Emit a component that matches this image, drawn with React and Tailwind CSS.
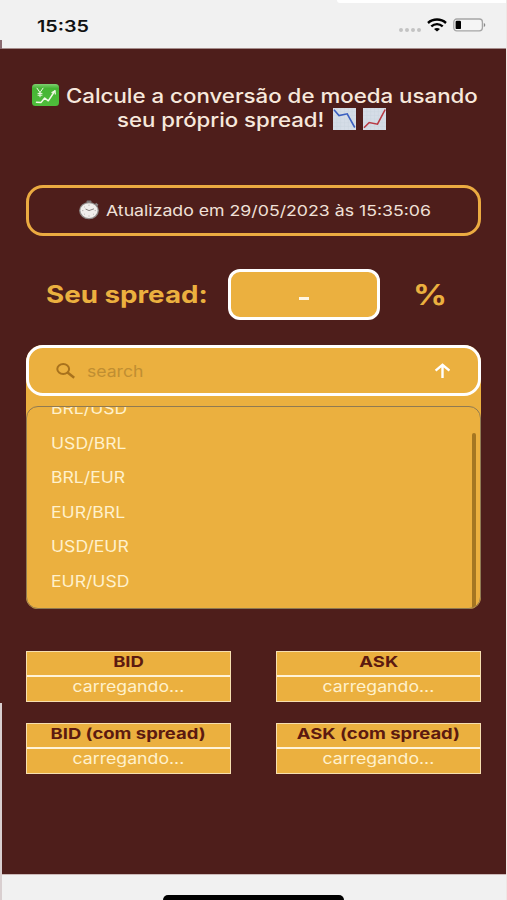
import React, { useState } from "react";

const PAIRS = ["BRL/USD", "USD/BRL", "BRL/EUR", "EUR/BRL", "USD/EUR", "EUR/USD"];

const QUOTES = ["BID", "ASK", "BID (com spread)", "ASK (com spread)"];

// Text set wider than the font's natural proportions
const Wide = ({ className = "", children }) => (
  <span className={`inline-block whitespace-nowrap ${className}`}>{children}</span>
);

const YenChart = () => (
  <svg width="27" height="22" viewBox="0 0 27 22" className="shrink-0">
    <defs>
      <linearGradient id="yen" x1="0" y1="0" x2="0" y2="1">
        <stop offset="0" stopColor="#7fd070" />
        <stop offset="0.2" stopColor="#45b534" />
        <stop offset="1" stopColor="#4fbd3b" />
      </linearGradient>
    </defs>
    <rect width="27" height="22" rx="3.5" fill="url(#yen)" />
    <g fill="none" stroke="#f1f8e6" strokeLinecap="round" strokeLinejoin="round">
      <path d="M5 4.2l3 4.3 3-4.3M8 8.5v4.3M6 9.4h4M6 11.2h4" strokeWidth="1" />
      <path d="M4.5 18.2l4.6.2 3.6-4.4 3.6 2.8L22.8 7" strokeWidth="1.5" />
      <path d="M20 8.6l3-1.8.3 3.2" strokeWidth="1.2" />
    </g>
  </svg>
);

const TrendChart = ({ down }) => (
  <svg width="23" height="22" viewBox="0 0 23 22" className="shrink-0">
    <rect width="23" height="22" fill="#d5dde7" />
    <path
      d="M0 3.7h23M0 7.4h23M0 11h23M0 14.7h23M0 18.3h23M3.8 0v22M7.6 0v22M11.5 0v22M15.3 0v22M19.1 0v22"
      stroke="#cbd4df"
      strokeWidth="0.5"
    />
    <path
      d={down ? "M1 1.8L6 7.5l8.2-1.7L21.8 19.5" : "M1 19.8l5.2-5.3 8.3 1.7L22.2 1.5"}
      fill="none"
      stroke={down ? "#3a5fc0" : "#b93a44"}
      strokeWidth="1.6"
    />
  </svg>
);

const Stopwatch = () => (
  <svg width="22" height="20" viewBox="0 0 22 20" className="-mt-px shrink-0">
    <rect x="8.6" y="0.5" width="4.8" height="2.6" rx="0.8" fill="#7c7776" />
    <path d="M17.5 3.5l2.4 2" stroke="#8b8686" strokeWidth="1.8" />
    <ellipse cx="11" cy="10.6" rx="9.9" ry="8.6" fill="#8f8b89" />
    <ellipse cx="11" cy="10.6" rx="8.6" ry="7.4" fill="#f0eeeb" />
    <path d="M7.5 9l3.5 1.6 5-1.8" fill="none" stroke="#6b6463" strokeWidth="0.8" />
    <path
      d="M11 4.6v1.3M11 15.4v1.3M4 10.6h1.4M16.6 10.6H18M6 6.6l.9.7M16 14.6l-.9-.7M6 14.6l.9-.7"
      stroke="#a5a09e"
      strokeWidth="0.7"
    />
  </svg>
);

const StatusBar = () => (
  <header className="relative flex h-[49px] items-start justify-between border-b border-[#a58c8b] bg-[#f1f1f1] pl-[37px] pr-[21px]">
    <div className="absolute right-0 top-0 h-[3px] w-[170px] rounded-bl-full bg-white" />
    <Wide className="mt-4 origin-left scale-x-[1.23] text-base/5 font-semibold text-[#111]">15:35</Wide>
    <div className="mt-[18px] flex items-center">
      <div className="mr-[6px] mt-[9px] flex gap-[2px]">
        {[0, 1, 2, 3].map((dot) => (
          <i key={dot} className="size-1 rounded-full bg-[#c3c3c3]" />
        ))}
      </div>
      <svg width="20" height="14" viewBox="0 0 20 14">
        <g fill="none" stroke="#000" strokeWidth="2.4">
          <path d="M1 5C6 .4 14 .4 19 5" />
          <path d="M4.3 8.4c3.3-3 8.1-3 11.4 0" />
        </g>
        <path d="M7 11c1.8-1.5 4.2-1.5 6 0l-3 2.6z" />
      </svg>
      <svg width="33" height="14" viewBox="0 0 33 14" className="ml-[6px]">
        <rect x="0.8" y="1" width="28.6" height="11.8" rx="3" fill="#f5f5f5" stroke="#a5a5a5" strokeWidth="1.3" />
        <rect x="2.6" y="2.7" width="5.4" height="8.4" rx="1.2" />
        <path d="M30.8 5v4q1.5-.6 1.5-2t-1.5-2z" fill="#8a8a8a" />
      </svg>
    </div>
  </header>
);

const QuoteCard = ({ label }) => (
  <div className="h-[51px] border border-[#f6dfb0] bg-[#ebb03f] text-center text-[15px]">
    <div className="h-[25px] border-b-2 border-[#fff3d8] leading-[19px] font-bold text-[#5c1a10]">
      <Wide className="scale-x-[1.23]">{label}</Wide>
    </div>
    <div className="leading-5 text-[#fff1cc]">
      <Wide className="scale-x-[1.18]">carregando...</Wide>
    </div>
  </div>
);

export default function App() {
  const [search, setSearch] = useState("");

  return (
    <div className="relative flex h-[900px] w-[507px] flex-col overflow-hidden bg-[#4e1e1b] font-['Inter',sans-serif]">
      <StatusBar />

      <main className="flex-1 px-[26px] pt-[34px]">
        <h1 className="text-xl/6 font-medium text-[#f7e8dc]">
          <div className="flex items-center pl-[6px]">
            <YenChart />
            <Wide className="ml-[7px] mt-px -mb-px origin-left scale-x-[1.114]">
              Calcule a conversão de moeda usando
            </Wide>
          </div>
          <div className="flex items-center pl-[91px]">
            <div className="mt-px -mb-px w-[216px]">
              <Wide className="origin-left scale-x-[1.11]">seu próprio spread!</Wide>
            </div>
            <div className="flex gap-[7px]">
              <TrendChart down />
              <TrendChart />
            </div>
          </div>
        </h1>

        <div className="mt-[54px] flex h-[51px] w-[455px] items-center rounded-[17px] border-[3px] border-[#ebab41] pl-[49px] text-[15px] text-[#f0e0d8]">
          <Stopwatch />
          <Wide className="ml-[6px] mt-px origin-left scale-x-[1.18]">
            Atualizado em 29/05/2023 às 15:35:06
          </Wide>
        </div>

        <div className="mt-[33px] flex h-[51px] items-center pl-5 text-[#ebb03f]">
          <div className="w-[182px]">
            <Wide className="origin-left scale-x-[1.155] text-2xl font-bold">Seu spread:</Wide>
          </div>
          <div className="flex h-full w-[152px] items-center justify-center rounded-xl border-[3px] border-white bg-[#ebb03f] pt-2">
            <div className="h-[3px] w-[10px] bg-[#fff6e5]" />
          </div>
          <Wide className="ml-[33px] origin-left scale-x-[1.2] text-[28px] font-bold">%</Wide>
        </div>

        <div className="mt-[25px] w-[455px] rounded-t-[17px] rounded-b-xl bg-[#ebb03f]">
          <div className="flex h-[51px] items-center rounded-[17px] border-[3px] border-white pl-[27px] pr-7">
            <svg width="20" height="16" viewBox="0 0 20 16" fill="none" stroke="#a8721d">
              <ellipse cx="7.2" cy="6" rx="5.9" ry="4.9" strokeWidth="2" />
              <path d="M11.6 9.6l6.6 5.2" strokeWidth="2.5" />
            </svg>
            <div className="ml-[11px] flex-1">
              <input
                className="w-40 origin-left scale-x-[1.1] bg-transparent text-base outline-none placeholder:text-[#c08e32]"
                placeholder="search"
                value={search}
                onChange={(e) => setSearch(e.target.value)}
              />
            </div>
            <svg width="16" height="16" viewBox="0 0 16 16" fill="none" stroke="#fff" strokeWidth="2.4">
              <path d="M8.5 15V2M1.6 7.6l6.9-5.8 6.9 5.8" />
            </svg>
          </div>

          <div className="relative mt-[10px] h-[203px] overflow-hidden rounded-xl border border-[#8f7a52]">
            <ul className="-mt-4 pl-[24px] text-base text-[#fff1cc]">
              {PAIRS.map((pair) => (
                <li key={pair} className="flex h-[34.5px] items-center">
                  <Wide className="origin-left scale-x-[1.1]">{pair}</Wide>
                </li>
              ))}
            </ul>
            <div className="absolute right-1 top-[26px] h-[176px] w-1 rounded-t bg-[#a47622]" />
          </div>
        </div>

        <div className="mt-[42px] grid w-[455px] grid-cols-[205px_205px] gap-x-[45px] gap-y-[21px]">
          {QUOTES.map((label) => (
            <QuoteCard key={label} label={label} />
          ))}
        </div>
      </main>

      <footer className="flex h-[26px] items-end justify-center border-t border-[#cbb9b8] bg-[#f1f1f1]">
        <div className="h-[5px] w-[181px] rounded-t-full bg-black" />
      </footer>

      {/* Pale slivers along the screen edges */}
      <div className="absolute left-0 top-[703px] h-[197px] w-[2px] bg-[#d9cfd0]" />
      <div className="absolute left-0 top-[40px] h-[9px] w-[2px] bg-[#8a6a70]" />
      <div className="absolute right-0 top-0 h-full w-px bg-[#f0e6e4]" />
    </div>
  );
}
